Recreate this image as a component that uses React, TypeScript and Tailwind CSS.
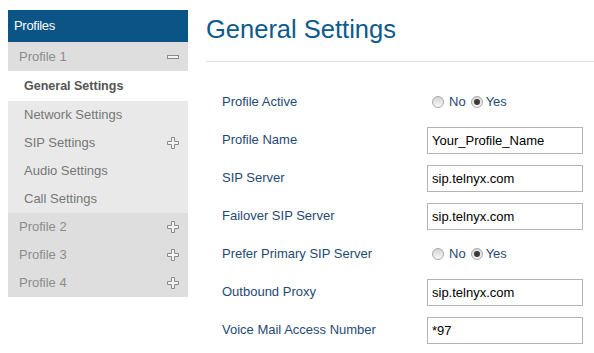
import { useState } from "react";

const FONT = { fontFamily: '"Liberation Sans", Arial, sans-serif' };

function MinusIcon() {
    return (
        <svg width="12" height="4" viewBox="0 0 12 4" className="shrink-0">
            <rect x="0.5" y="0.5" width="11" height="3" fill="#f4f4f4" stroke="#8a8a8a" />
        </svg>
    );
}

function PlusIcon() {
    return (
        <svg width="12" height="12" viewBox="0 0 12 12" className="shrink-0">
            <path
                d="M4.5 0.5 H7.5 V4.5 H11.5 V7.5 H7.5 V11.5 H4.5 V7.5 H0.5 V4.5 H4.5 Z"
                fill="#f4f4f4"
                stroke="#8a8a8a"
            />
        </svg>
    );
}

function Radio({ checked, onClick }: { checked: boolean; onClick: () => void }) {
    return (
        <span
            onClick={onClick}
            className="inline-flex items-center justify-center w-[12px] h-[12px] rounded-full border border-[#a9a9a9] bg-gradient-to-b from-[#d6d6d6] to-[#f8f8f8] cursor-pointer"
        >
            {checked && <span className="w-[6px] h-[6px] rounded-full bg-[#3a3a3a]" />}
        </span>
    );
}

function YesNo() {
    const [yes, setYes] = useState(true);
    return (
        <div className="flex items-center pl-[5px] text-[13px] text-[#1f4a74]">
            <Radio checked={!yes} onClick={() => setYes(false)} />
            <span className="ml-[5px]">No</span>
            <span className="ml-[5px] flex">
                <Radio checked={yes} onClick={() => setYes(true)} />
            </span>
            <span className="ml-[3px]">Yes</span>
        </div>
    );
}

interface Field {
    label: string;
    kind: "radio" | "text";
    value?: string;
}

const fields: Field[] = [
    { label: "Profile Active", kind: "radio" },
    { label: "Profile Name", kind: "text", value: "Your_Profile_Name" },
    { label: "SIP Server", kind: "text", value: "sip.telnyx.com" },
    { label: "Failover SIP Server", kind: "text", value: "sip.telnyx.com" },
    { label: "Prefer Primary SIP Server", kind: "radio" },
    { label: "Outbound Proxy", kind: "text", value: "sip.telnyx.com" },
    { label: "Voice Mail Access Number", kind: "text", value: "*97" },
];

const subItems = ["General Settings", "Network Settings", "SIP Settings", "Audio Settings", "Call Settings"];

export default function App() {
    return (
        <div className="flex bg-white w-[594px] h-[353px] overflow-hidden" style={FONT}>
            {/* Sidebar */}
            <div className="ml-[8px] mt-[10px] w-[180px] shrink-0 self-start">
                <div className="h-[32px] bg-[#0a5486] text-white text-[13px] flex items-center pl-[6px] tracking-[-0.3px]">
                    Profiles
                </div>
                <div className="h-[29px] bg-[#dedede] flex items-center justify-between pl-[11px] pr-[9px] text-[13px] text-[#8c8c8c]">
                    <span>Profile 1</span>
                    <MinusIcon />
                </div>
                {subItems.map((item, i) => (
                    <div
                        key={item}
                        className={
                            i === 0
                                ? "h-[30px] bg-white flex items-center pl-[16px] text-[12.5px] font-bold text-[#555]"
                                : "h-[28px] bg-[#e9e9e9] flex items-center justify-between pl-[16px] pr-[9px] text-[13px] text-[#777]"
                        }
                    >
                        <span>{item}</span>
                        {item === "SIP Settings" && <PlusIcon />}
                    </div>
                ))}
                {["Profile 2", "Profile 3", "Profile 4"].map((p) => (
                    <div
                        key={p}
                        className="h-[28px] bg-[#dedede] flex items-center justify-between pl-[11px] pr-[9px] text-[13px] text-[#8c8c8c]"
                    >
                        <span>{p}</span>
                        <PlusIcon />
                    </div>
                ))}
            </div>

            {/* Main */}
            <div className="ml-[18px] flex-1">
                <h1 className="mt-[14px] h-[30px] leading-[30px] text-[25.5px] text-[#0d5a8c]">General Settings</h1>
                <div className="mt-[17px] h-px bg-[#dddddd]" />
                <div className="mt-[21px] pl-[16px]">
                    {fields.map((f) => (
                        <div key={f.label} className="h-[38px] flex items-center">
                            <div className="w-[205px] text-[13px] text-[#1f4a74]">{f.label}</div>
                            {f.kind === "radio" ? (
                                <YesNo />
                            ) : (
                                <input
                                    type="text"
                                    defaultValue={f.value}
                                    className="w-[156px] h-[27px] border border-[#b4b4b4] px-[4px] text-[13px] text-black outline-none"
                                    style={FONT}
                                />
                            )}
                        </div>
                    ))}
                </div>
            </div>
        </div>
    );
}
